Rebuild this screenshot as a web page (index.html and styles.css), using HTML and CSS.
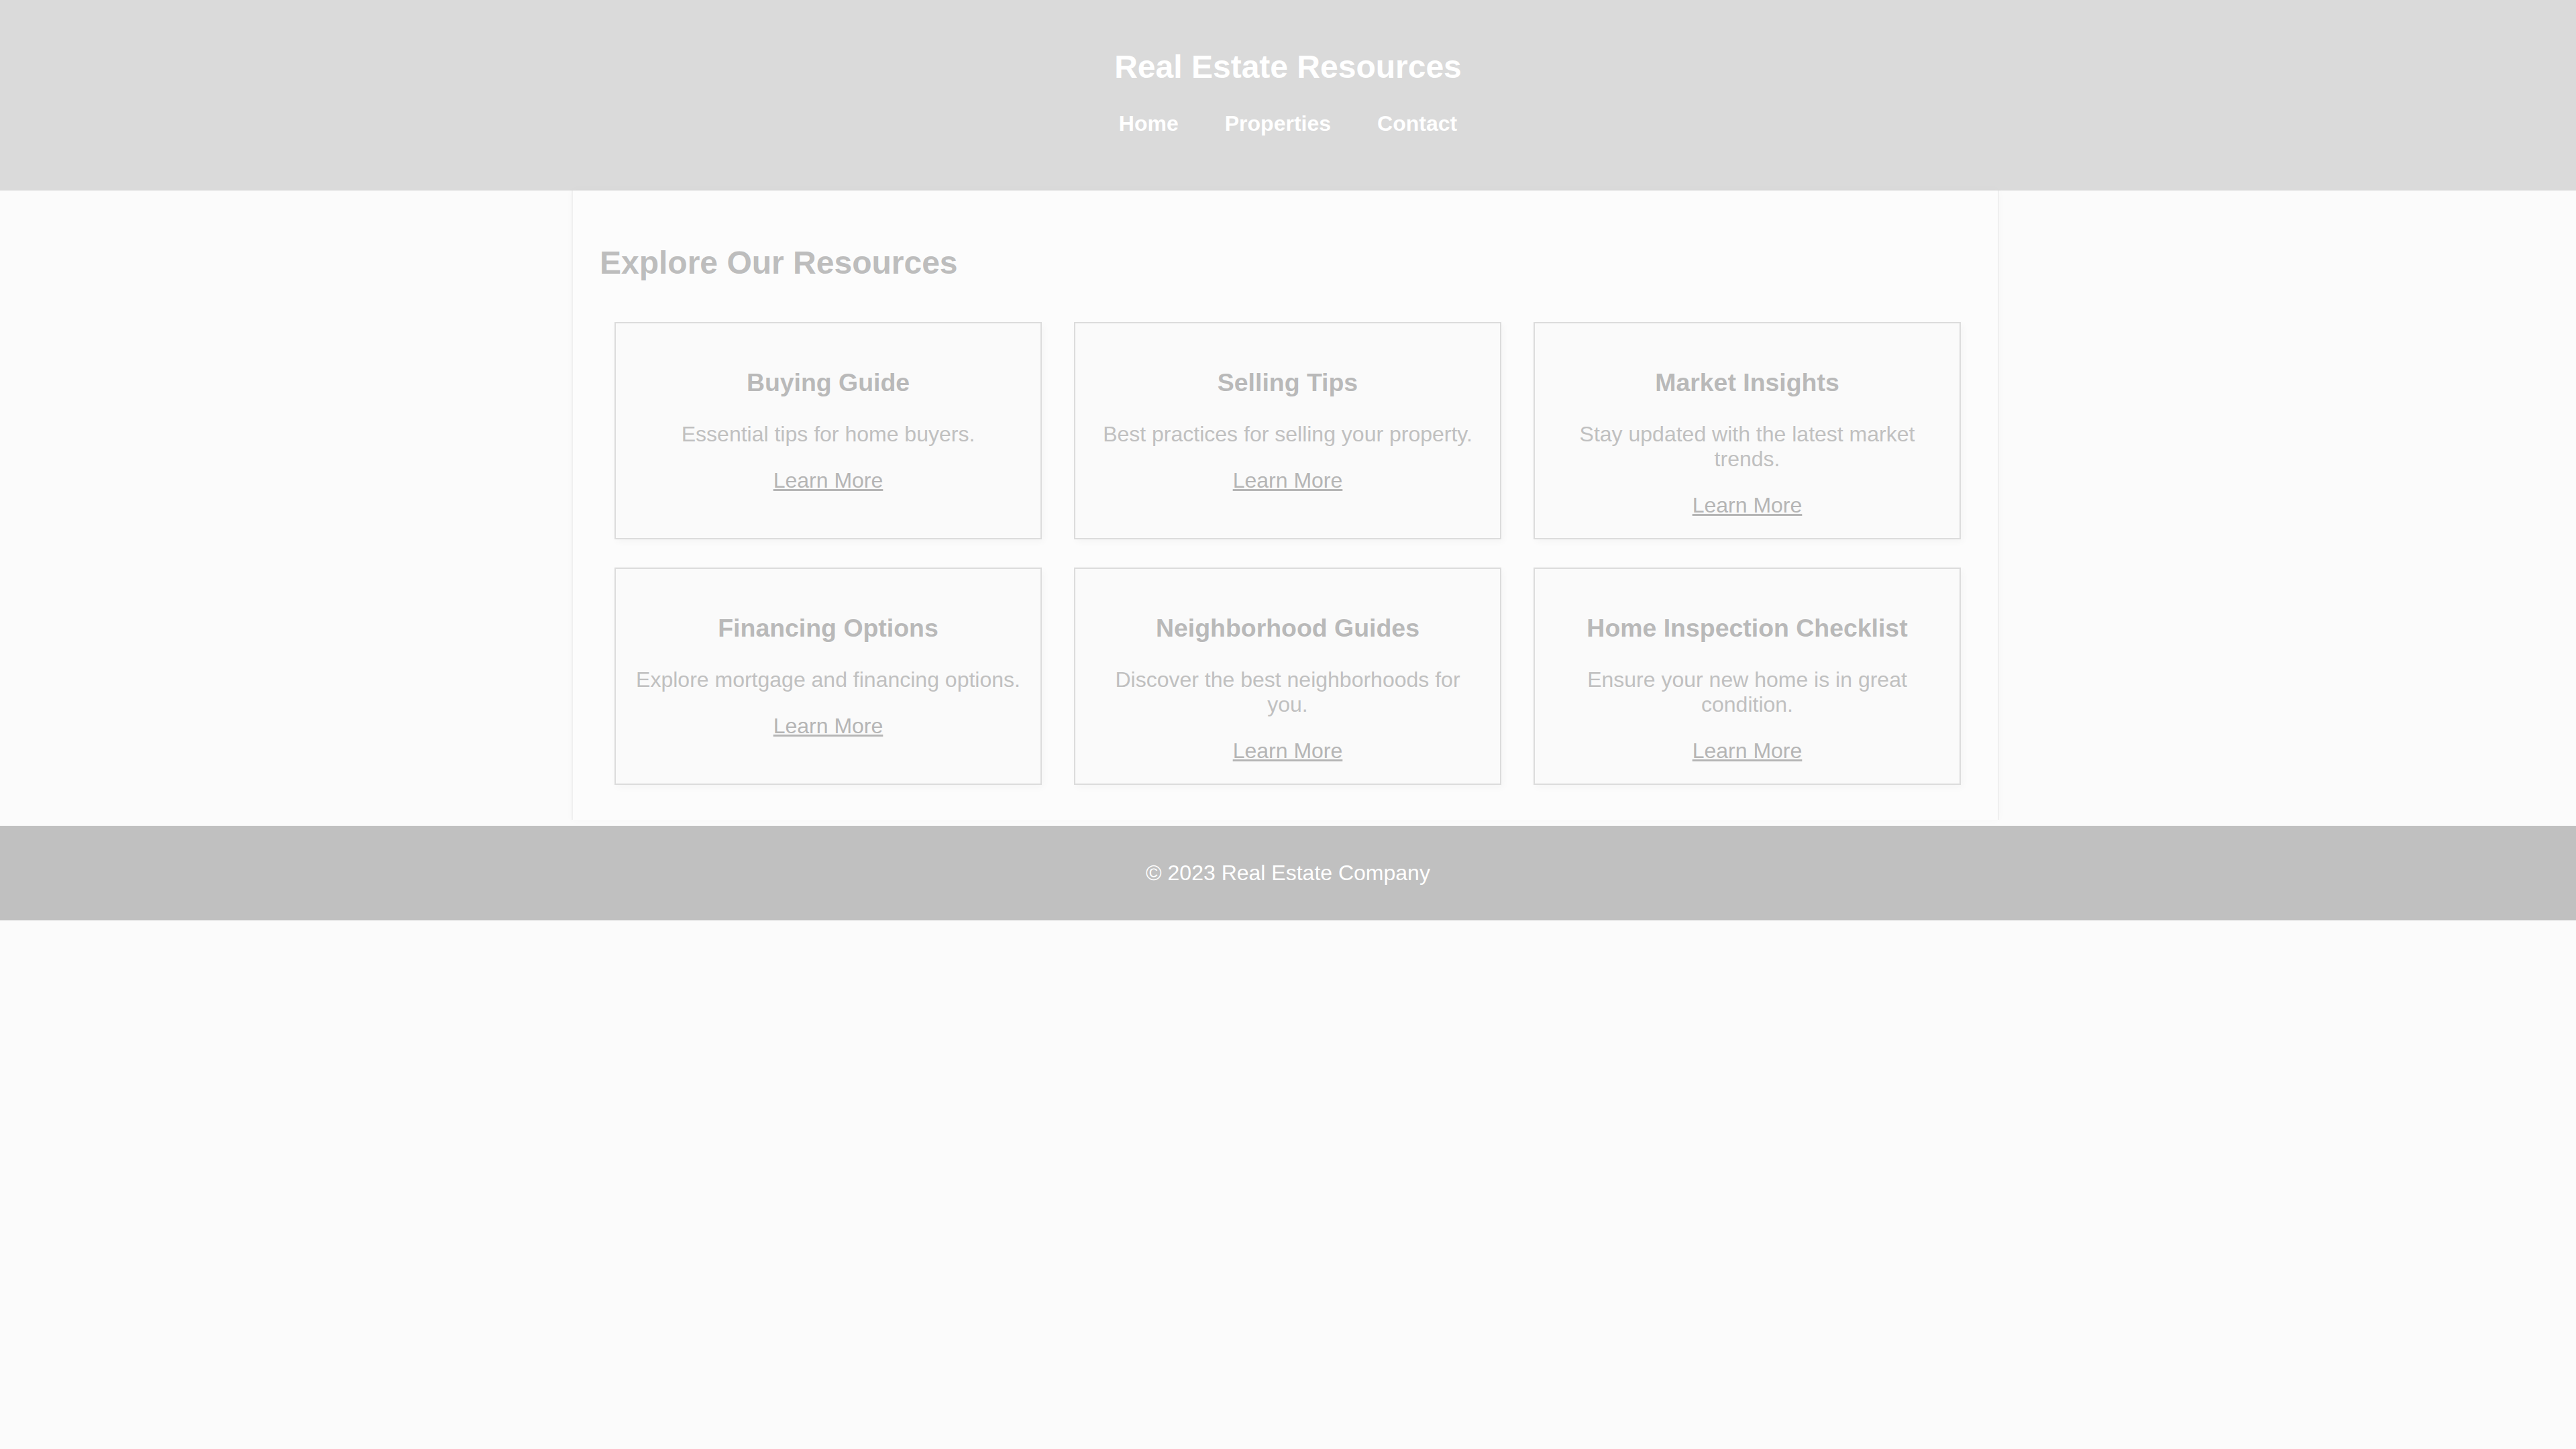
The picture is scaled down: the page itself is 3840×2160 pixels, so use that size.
FILE: index.html
```html
<!DOCTYPE html>
<html lang="en">
<head>
<meta charset="utf-8">
<title>Real Estate Resources</title>
<link rel="stylesheet" href="styles.css">
</head>
<body>
<header class="site-header">
  <h1 class="site-title">Real Estate Resources</h1>
  <nav class="site-nav">
    <a href="#">Home</a>
    <a href="#">Properties</a>
    <a href="#">Contact</a>
  </nav>
</header>
<main class="container">
  <h2 class="section-title">Explore Our Resources</h2>
  <div class="resource-grid">
    <div class="card">
      <h3 class="card-title">Buying Guide</h3>
      <p class="card-text">Essential tips for home buyers.</p>
      <a class="card-link" href="#">Learn More</a>
    </div>
    <div class="card">
      <h3 class="card-title">Selling Tips</h3>
      <p class="card-text">Best practices for selling your property.</p>
      <a class="card-link" href="#">Learn More</a>
    </div>
    <div class="card">
      <h3 class="card-title">Market Insights</h3>
      <p class="card-text">Stay updated with the latest market trends.</p>
      <a class="card-link" href="#">Learn More</a>
    </div>
    <div class="card">
      <h3 class="card-title">Financing Options</h3>
      <p class="card-text">Explore mortgage and financing options.</p>
      <a class="card-link" href="#">Learn More</a>
    </div>
    <div class="card">
      <h3 class="card-title">Neighborhood Guides</h3>
      <p class="card-text">Discover the best neighborhoods for you.</p>
      <a class="card-link" href="#">Learn More</a>
    </div>
    <div class="card">
      <h3 class="card-title">Home Inspection Checklist</h3>
      <p class="card-text">Ensure your new home is in great condition.</p>
      <a class="card-link" href="#">Learn More</a>
    </div>
  </div>
</main>
<footer class="site-footer">
  <p class="footer-text">© 2023 Real Estate Company</p>
</footer>
</body>
</html>
```

FILE: styles.css
```css
html {
  background: #fbfbfb;
}
body {
  margin: 0;
  font-family: "Liberation Sans", Arial, sans-serif;
  font-size: 32px;
  color: #bdbdbd;
  background: #fbfbfb;
}

.site-header {
  background: #dadada;
  color: #ffffff;
  text-align: center;
  padding: 40px 0 81px;
}
.site-title {
  font-size: 48px;
  font-weight: bold;
  margin: 32px 0 0;
  line-height: 55px;
}
.site-nav {
  display: flex;
  justify-content: center;
  gap: 69px;
  margin-top: 39px;
  line-height: 37px;
}
.site-nav a {
  color: #ffffff;
  font-weight: bold;
  text-decoration: none;
}

.container {
  width: 2128px;
  box-sizing: border-box;
  margin: 0 0 9px calc(50% - 1068px);
  padding: 0 40px 40px;
  background: #fcfcfc;
  border-left: 2px solid #efefef;
  border-right: 2px solid #efefef;
  box-shadow: 0 0 12px rgba(0, 0, 0, 0.025);
}
.section-title {
  margin: 0;
  padding-top: 81px;
  font-size: 48px;
  line-height: 54px;
  font-weight: bold;
  color: #bdbdbd;
}
.resource-grid {
  display: grid;
  grid-template-columns: repeat(3, 637px);
  column-gap: 48px;
  row-gap: 42px;
  padding: 61px 0 12px 22px;
}
.card {
  box-sizing: border-box;
  background: #fafafa;
  border: 2px solid #dcdcdc;
  box-shadow: 3px 4px 10px rgba(0, 0, 0, 0.03);
  padding: 30px 28px 30px;
  text-align: center;
}
.card-title {
  margin: 37px 0 0;
  font-size: 37.44px;
  line-height: 43px;
  font-weight: bold;
  color: #b9b9b9;
}
.card-text {
  margin: 37px 0 32px;
  line-height: 37px;
  color: #c0c0c0;
}
.card-link {
  color: #b5b5b5;
  text-decoration: underline;
  line-height: 37px;
}

.site-footer {
  background: #c0c0c0;
  color: #ffffff;
  text-align: center;
  padding: 20px 0;
}
.footer-text {
  margin: 32px 0;
  line-height: 37px;
}
```
